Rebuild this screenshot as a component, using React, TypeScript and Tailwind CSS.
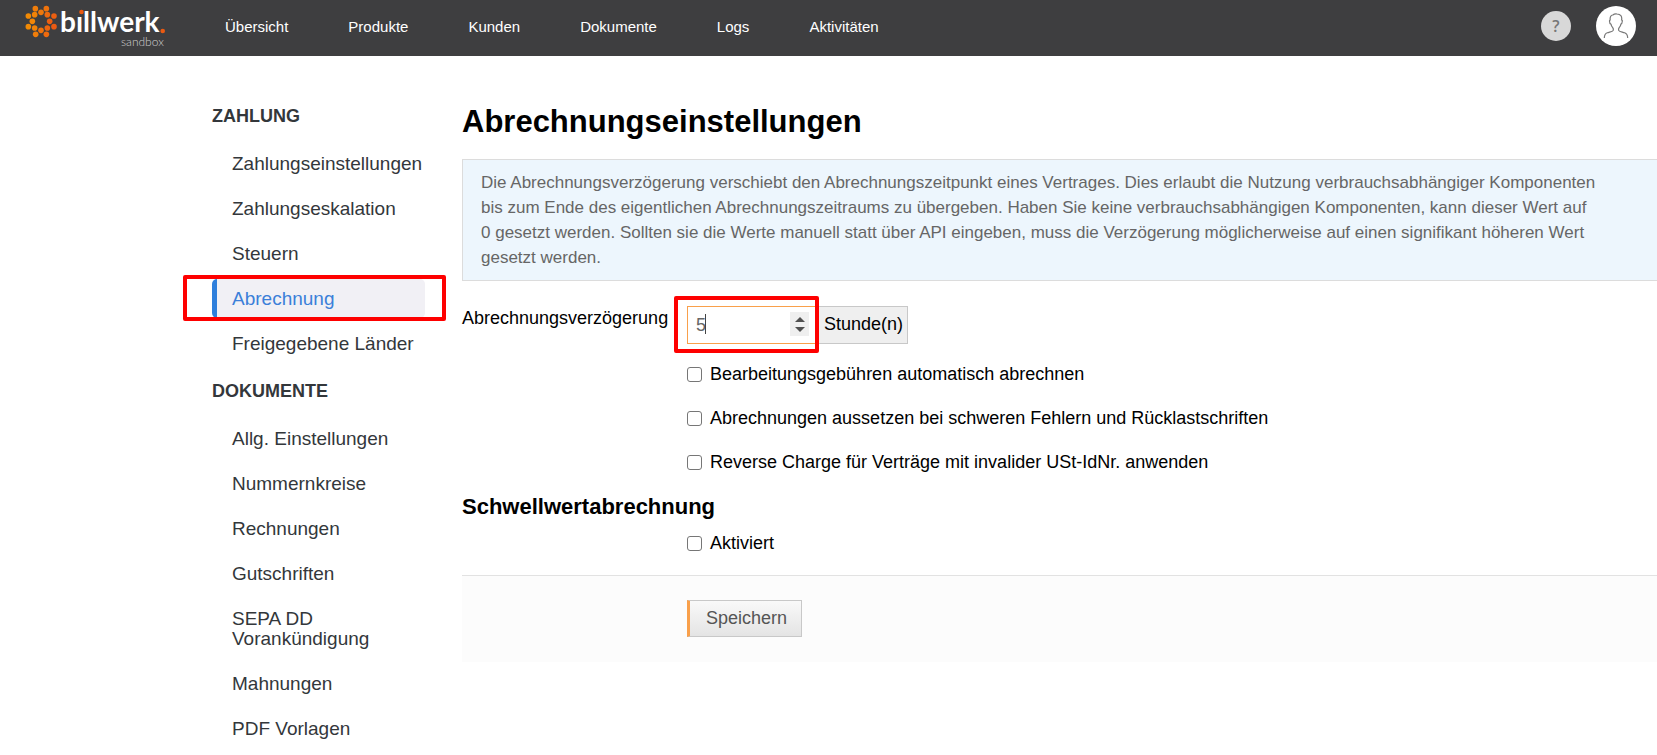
import { useState } from "react";

const navItems = ["Übersicht", "Produkte", "Kunden", "Dokumente", "Logs", "Aktivitäten"];

const sections = [
  {
    title: "Zahlung",
    items: ["Zahlungseinstellungen", "Zahlungseskalation", "Steuern", "Abrechnung", "Freigegebene Länder"],
  },
  {
    title: "Dokumente",
    items: [
      "Allg. Einstellungen",
      "Nummernkreise",
      "Rechnungen",
      "Gutschriften",
      "SEPA DD Vorankündigung",
      "Mahnungen",
      "PDF Vorlagen",
    ],
  },
];

const logoDots = [
  [34, 26, "#f07d0a"], [67, 26, "#ee720c"], [90, 48, "#ec5f10"], [90, 80, "#ea5a12"],
  [67, 103, "#ee6a0e"], [35, 103, "#f07d0a"], [13, 80, "#f28a05"], [13, 48, "#f28a05"],
  [51, 37, "#ef780b"], [70, 44, "#ee6a0e"], [77, 64, "#ec5f10"], [70, 84, "#ed650f"],
  [51, 91, "#ef720c"], [32, 84, "#f18207"], [25, 64, "#f28607"], [32, 44, "#f18207"],
] as const;

function Logo() {
  return (
    <a href="#" aria-label="billwerk sandbox" className="block shrink-0">
      <svg width="144" height="56" viewBox="0 0 144 56" aria-hidden="true">
        <g transform="translate(-1 0) scale(0.333333)">
          {logoDots.map(([x, y, fill]) => (
            <circle key={`${x}-${y}`} cx={x + 3} cy={y} r="8.4" fill={fill} />
          ))}
        </g>
        <text x="36" y="32" fill="#fff" fontFamily="Lato, sans-serif" fontWeight="700" fontSize="28">
          bıllwerk
        </text>
        <circle cx="57.5" cy="12" r="2.3" fill="#ea5a12" />
        <circle cx="138.700" cy="31" r="2.300" fill="#ea5a12" />
        <text x="97" y="46" fill="#d0d0d1" fontFamily="Lato, sans-serif" fontWeight="300" fontSize="12">
          sandbox
        </text>
      </svg>
    </a>
  );
}

function Header() {
  return (
    <header className="flex h-14 items-center overflow-hidden bg-[#3e3e40] pl-6">
      <Logo />
      <nav className="ml-[57px] flex flex-1 gap-[60px] pb-0.5 text-[15px] leading-5 text-white">
        {navItems.map((item) => (
          <a key={item} href="#">
            {item}
          </a>
        ))}
      </nav>
      <div className="flex items-center pr-[21px] pb-1">
        <button
          type="button"
          aria-label="Hilfe"
          className="mr-[25px] flex size-[30px] items-center justify-center rounded-full bg-[#d8d8d8] font-['Open_Sans',sans-serif] text-base font-semibold text-[#777]"
        >
          ?
        </button>
        <button
          type="button"
          aria-label="Benutzerkonto"
          className="flex size-10 items-center justify-center rounded-full bg-white"
        >
          <svg width="26" height="26" viewBox="0 0 26 26" fill="none" stroke="#777" strokeWidth="1.2" aria-hidden="true">
            <path d="M1.300 25C1.400 22 2.300 20.500 4.300 19.800C6.800 18.900 9.500 18.600 10.100 17.400C10.500 16.500 10.300 15.500 9.700 14.700C8.700 13.600 8.200 12.500 8 11.200C7 10.800 6.500 9.400 6.500 8.200C6.500 7.400 6.700 7 7.200 7C6.800 4 7.800 2.200 9.800 2C10.800 1.200 12.500 .7 14 1C17.500 1.200 19.300 3.200 18.600 7C19.200 7 19.400 7.500 19.300 8.200C19.200 9.500 18.700 10.800 17.900 11.100C17.700 12.500 17.200 13.600 16.200 14.700C15.600 15.500 15.400 16.500 15.800 17.400C16.400 18.600 19.100 18.900 21.600 19.800C23.600 20.500 24.600 22 24.700 25" />
          </svg>
        </button>
      </div>
    </header>
  );
}

function Sidebar() {
  return (
    <aside className="w-[213px] shrink-0 text-lg leading-5 text-[#33373b]">
      {sections.map((section) => (
        <section key={section.title}>
          <h2 className="flex h-14 items-center font-bold uppercase">{section.title}</h2>
          <ul className="flex flex-col gap-1.5 text-[19px] leading-5">
            {section.items.map((item) => {
              const active = item === "Abrechnung";
              return (
                <li key={item} className="relative">
                  <a
                    href="#"
                    className={
                      active
                        ? "block rounded-[5px] border-l-[5px] border-[#2f7fdc] bg-[#f1f0f5] pt-[10px] pb-[9px] pl-[15px] text-[#3b7fd9]"
                        : "block pt-[10px] pb-[9px] pl-5"
                    }
                  >
                    {item}
                  </a>
                  {active && (
                    <span className="pointer-events-none absolute -top-1 -right-[21px] -bottom-[3px] -left-[29px] rounded-xs border-4 border-[#fe0000]" />
                  )}
                </li>
              );
            })}
          </ul>
        </section>
      ))}
    </aside>
  );
}

function Check({ label }: { label: string }) {
  return (
    <label className="flex h-6 items-center gap-2">
      <input
        type="checkbox"
        className="size-[15px] appearance-none rounded-[3px] border border-[#767676] bg-white checked:bg-[#2f7fdc]"
      />
      {label}
    </label>
  );
}

function DelayField() {
  const [delay, setDelay] = useState(5);
  return (
    <div className="flex">
      <label htmlFor="delay" className="w-[225px] shrink-0 leading-6">
        Abrechnungsverzögerung
      </label>
      <div className="relative flex h-[38px]">
        <div className="relative">
          <input
            id="delay"
            type="number"
            value={delay}
            onChange={(e) => setDelay(Number(e.target.value))}
            className="h-full w-[130px] border border-[#f9a04b] bg-white pr-8 pl-2 text-[#666] [appearance:textfield] focus:outline-none [&::-webkit-inner-spin-button]:appearance-none"
          />
          <span className="pointer-events-none absolute top-2 left-[18px] h-5 w-px bg-[#444]" />
          <div className="absolute top-1.5 right-2 flex h-6 w-[19px] flex-col bg-[#efefef]">
            <button type="button" aria-label="Erhöhen" onClick={() => setDelay(delay + 1)} className="flex flex-1 items-end justify-center pb-[2px]">
              <svg width="10" height="5" viewBox="0 0 10 5" fill="#505050"><path d="M0 5 5 0l5 5z" /></svg>
            </button>
            <button type="button" aria-label="Verringern" onClick={() => setDelay(delay - 1)} className="flex flex-1 items-start justify-center pt-[3px]">
              <svg width="10" height="5" viewBox="0 0 10 5" fill="#505050"><path d="M0 0 5 5l5-5z" /></svg>
            </button>
          </div>
        </div>
        <span className="flex items-center border border-l-0 border-[#c8c8c8] bg-[#efefef] pr-1 pb-0.5 pl-[7px]">
          Stunde(n)
        </span>
        <span className="pointer-events-none absolute -top-[10px] -bottom-[9px] -left-[13px] w-[145px] rounded-xs border-4 border-[#fe0000]" />
      </div>
    </div>
  );
}

export default function App() {
  return (
    <div className="min-h-screen overflow-hidden bg-white font-['Liberation_Sans',Arial,sans-serif] text-black">
      <Header />
      <div className="flex gap-[37px] pt-8 pl-[212px]">
        <Sidebar />
        <main className="min-w-0 flex-1 pt-3.5 text-lg leading-6">
          <h1 className="text-[31px] leading-10 font-bold">Abrechnungseinstellungen</h1>
          <p className="mt-[17px] border border-r-0 border-[#dcdcdc] bg-[#edf6fd] py-[10px] pl-[18px] text-[17px] leading-[25px] text-[#666]">
            Die Abrechnungsverzögerung verschiebt den Abrechnungszeitpunkt eines Vertrages. Dies erlaubt die Nutzung
            verbrauchsabhängiger Komponenten
            <br />
            bis zum Ende des eigentlichen Abrechnungszeitraums zu übergeben. Haben Sie keine verbrauchsabhängigen
            Komponenten, kann dieser Wert auf
            <br />
            0 gesetzt werden. Sollten sie die Werte manuell statt über API eingeben, muss die Verzögerung
            möglicherweise auf einen signifikant höheren Wert
            <br />
            gesetzt werden.
          </p>
          <form onSubmit={(e) => e.preventDefault()}>
            <div className="pt-[25px]">
              <DelayField />
            </div>
            <div className="flex flex-col gap-5 pt-[18px] pl-[225px]">
              <Check label="Bearbeitungsgebühren automatisch abrechnen" />
              <Check label="Abrechnungen aussetzen bei schweren Fehlern und Rücklastschriften" />
              <Check label="Reverse Charge für Verträge mit invalider USt-IdNr. anwenden" />
            </div>
            <h2 className="mt-[17px] text-[22px] leading-8 font-bold">Schwellwertabrechnung</h2>
            <div className="pt-2 pb-5 pl-[225px]">
              <Check label="Aktiviert" />
            </div>
            <div className="border-t border-[#e2e2e2] bg-[#fcfcfc] pt-6 pb-[25px] pl-[225px]">
              <button
                type="submit"
                className="h-[37px] border border-l-[3px] border-[#c8c8c8] border-l-[#f9a04b] bg-linear-to-b from-[#f9f9f9] to-[#e4e4e4] pr-3.5 pb-0.5 pl-4 text-[#555]"
              >
                Speichern
              </button>
            </div>
          </form>
        </main>
      </div>
    </div>
  );
}
